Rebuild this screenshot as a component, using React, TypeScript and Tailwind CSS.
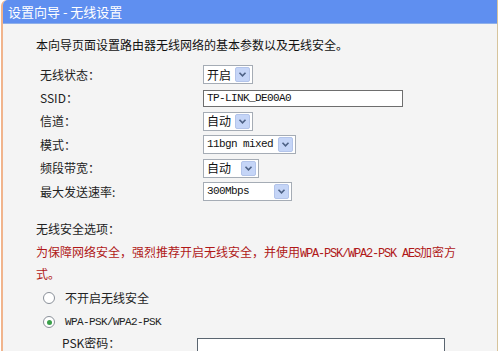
import React from "react";

const cn = '"Noto Sans CJK SC", "Noto Sans", sans-serif';
const mono = '"Liberation Mono", "Noto Sans CJK SC", monospace';

function Chevron() {
  return (
    <svg width="9" height="7" viewBox="0 0 9 7">
      <path d="M1.5 1.8 L4.5 4.8 L7.5 1.8" fill="none" stroke="#4d6185" strokeWidth="1.6" />
    </svg>
  );
}

function Select({ value, width, isMono }: { value: string; width: number; isMono?: boolean }) {
  return (
    <div
      className="flex items-center justify-between bg-white border border-[#a5acb5] h-[19px] pl-[3px] pr-[2px]"
      style={{ width }}
    >
      <span
        className={
          isMono
            ? "text-[11px] tracking-[-0.6px] text-[#111] leading-none whitespace-nowrap"
            : "text-[12px] text-[#111] leading-none whitespace-nowrap"
        }
        style={{ fontFamily: isMono ? mono : cn }}
      >
        {value}
      </span>
      <span className="flex items-center justify-center w-[15px] h-[15px] shrink-0 bg-[#c5d5f7] border border-[#b3c4ea] rounded-[2px]">
        <Chevron />
      </span>
    </div>
  );
}

function Row({ label, children }: { label: string; children: React.ReactNode }) {
  return (
    <div className="flex items-center h-[23.4px]">
      <div className="w-[200px] shrink-0 pl-[37px] text-[12px] text-[#222]" style={{ fontFamily: cn }}>
        {label}
      </div>
      {children}
    </div>
  );
}

export default function App() {
  return (
    <div className="w-[500px] h-[351px] overflow-hidden bg-white">
      <div className="h-full ml-[1px] mr-[2px] border-l-2 border-l-[#f1b48c] border-r border-r-[#d7c49c] bg-[#f4f4f4] rounded-tl-[6px] flex flex-col">
        <div
          className="h-[24px] shrink-0 bg-[#5f8ff0] rounded-tl-[5px] flex items-center pl-[5px] text-white text-[13px] border-b border-b-[#8fb0ea]"
          style={{ fontFamily: cn }}
        >
          设置向导 - 无线设置
        </div>
        <div className="pl-[33px] pt-[13px] text-[12px] text-[#111] leading-[16px]" style={{ fontFamily: cn }}>
          本向导页面设置路由器无线网络的基本参数以及无线安全。
        </div>
        <div className="mt-[10px] flex flex-col">
          <Row label="无线状态：">
            <Select value="开启" width={50} />
          </Row>
          <Row label="SSID：">
            <div
              className="w-[200px] h-[17px] bg-white border border-[#6e6e6e] flex items-center pl-[3px] text-[11px] tracking-[-0.6px] text-[#111]"
              style={{ fontFamily: mono }}
            >
              TP-LINK_DE00A0
            </div>
          </Row>
          <Row label="信道：">
            <Select value="自动" width={50} />
          </Row>
          <Row label="模式：">
            <Select value="11bgn mixed" width={93} isMono />
          </Row>
          <Row label="频段带宽：">
            <Select value="自动" width={56} />
          </Row>
          <Row label="最大发送速率:">
            <div className="h-[21px] flex items-center">
              <Select value="300Mbps" width={89} isMono />
            </div>
          </Row>
        </div>
        <div className="pl-[33px] mt-[17px] text-[12px] text-[#222] leading-[18px]" style={{ fontFamily: cn }}>
          无线安全选项：
        </div>
        <div
          className="pl-[33px] mt-[3.5px] text-[12px] text-[#b01818] leading-[19px]"
          style={{ fontFamily: cn }}
        >
          为保障网络安全，强烈推荐开启无线安全，并使用
          <span style={{ fontFamily: mono }} className="tracking-[-1.2px]">WPA-PSK/WPA2-PSK AES</span>
          加密方
          <br />
          式。
        </div>
        <div className="mt-[3.5px] flex flex-col">
          <div className="flex items-center h-[24px] pl-[40px]">
            <span className="w-[12px] h-[12px] rounded-full border border-[#8a9099] bg-white" />
            <span className="ml-[10px] text-[12px] text-[#222]" style={{ fontFamily: cn }}>
              不开启无线安全
            </span>
          </div>
          <div className="flex items-center h-[24px] pl-[40px]">
            <span className="w-[12px] h-[12px] rounded-full border border-[#8a9099] bg-white flex items-center justify-center">
              <span className="w-[5px] h-[5px] rounded-full bg-[#3aa04a]" />
            </span>
            <span className="ml-[10px] text-[11px] text-[#222] tracking-[-0.6px]" style={{ fontFamily: mono }}>
              WPA-PSK/WPA2-PSK
            </span>
          </div>
          <div className="flex items-start h-[24px] pt-[1px]">
            <div className="w-[194px] shrink-0 pl-[59px] text-[12px] leading-[16px] text-[#222]" style={{ fontFamily: cn }}>
              PSK密码：
            </div>
            <div className="w-[248px] h-[22px] bg-white border border-[#5a6570] mt-[3px]" />
          </div>
        </div>
      </div>
    </div>
  );
}
